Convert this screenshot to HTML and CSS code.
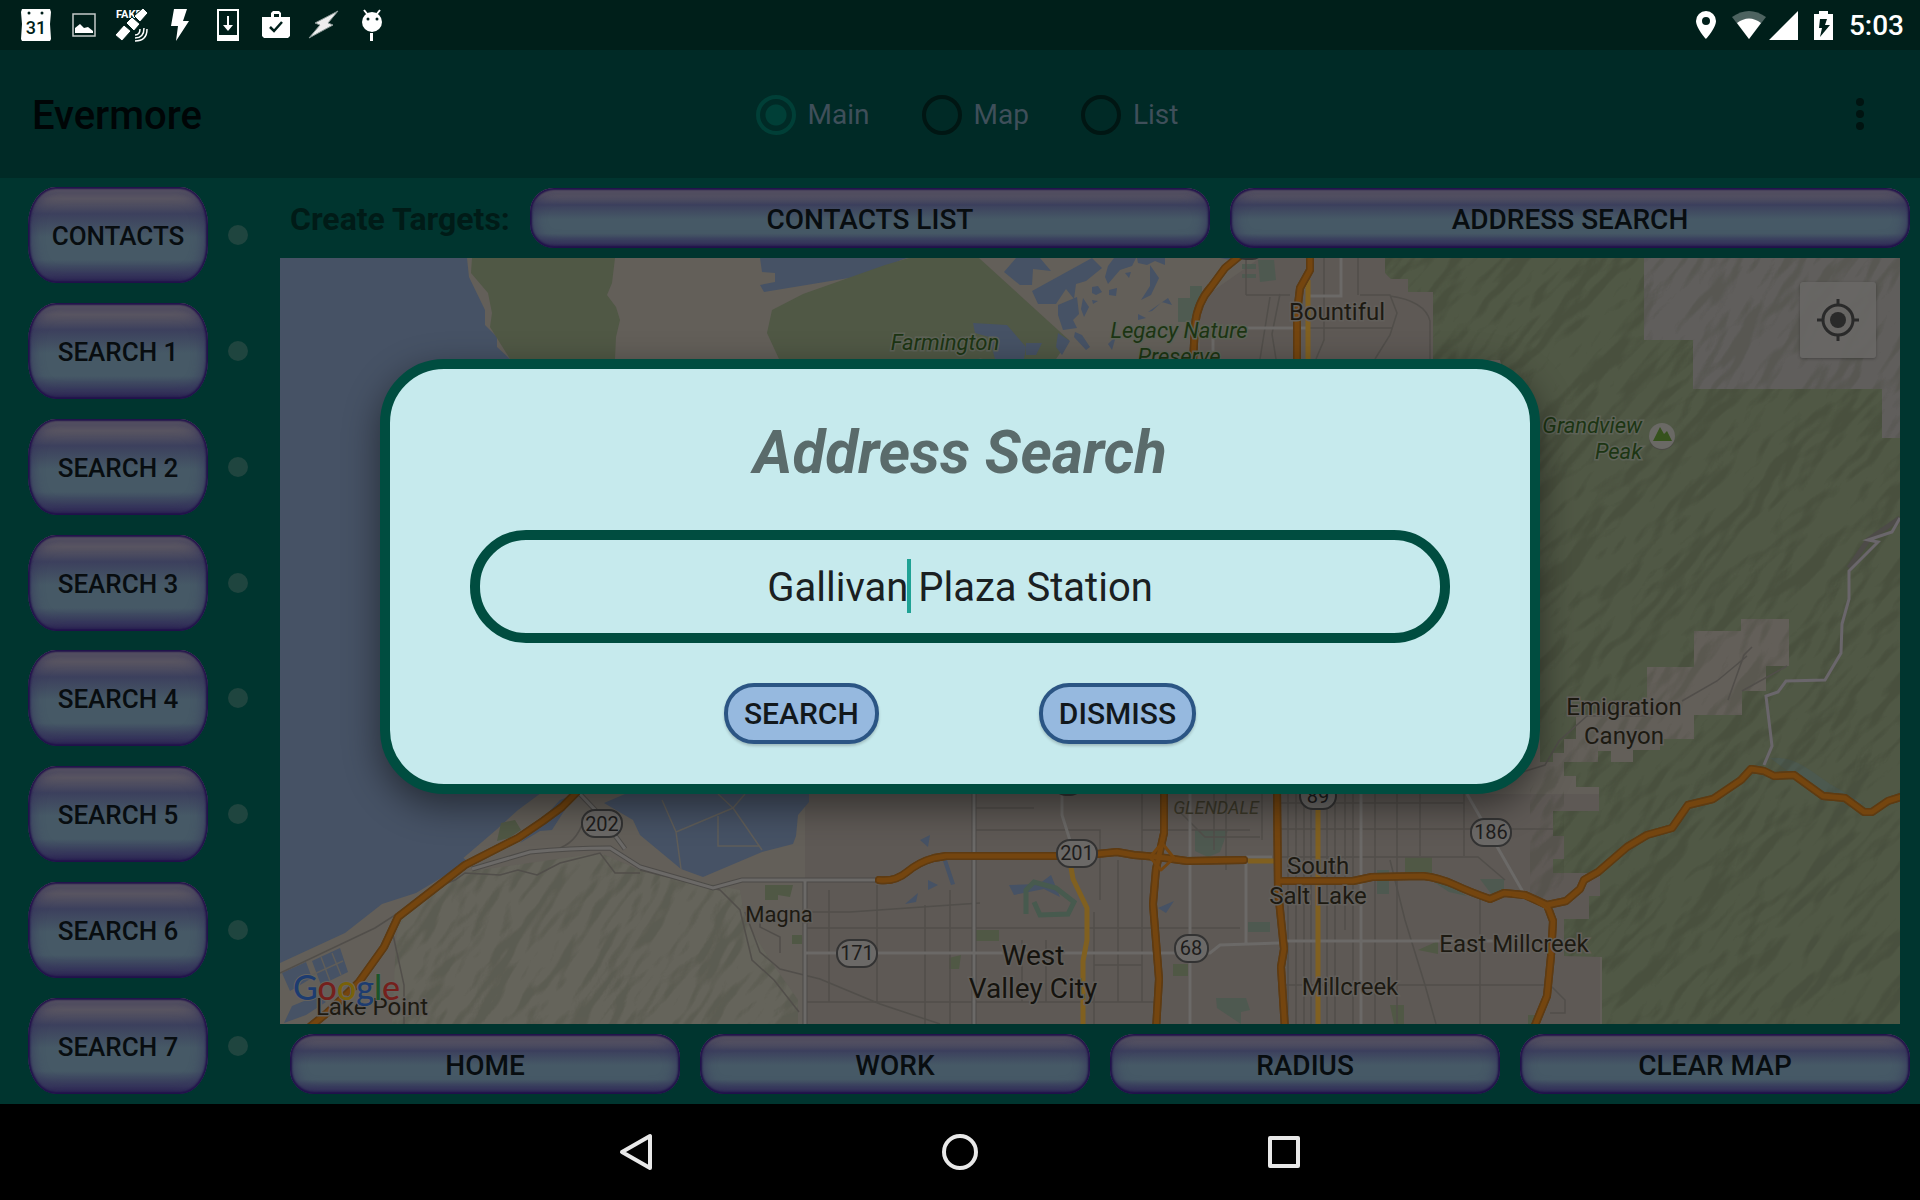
FILE: index.html
```html
<!DOCTYPE html>
<html lang="en">
<head>
<meta charset="utf-8">
<title>Evermore</title>
<link rel="stylesheet" href="styles.css">
</head>
<body>
<header class="status">
  <div class="status-icons">
    <svg width="32" height="32" viewBox="0 0 32 32"><path fill="#fff" d="M2 0h28l1 3-1 12 1 15-1 2H2l-1-2 1-15L1 3z"/><circle cx="9" cy="4" r="1.5" fill="#001f1a"/><circle cx="22" cy="4" r="1.5" fill="#001f1a"/><text class="cal" x="16" y="25">31</text></svg>
    <svg width="24" height="24" viewBox="0 0 24 24"><path fill="none" stroke="#c3cac9" stroke-width="1.5" d="M1 1h22v22H1z"/><path fill="#fff" d="M3 20v-5l5-4 4 4 4-1 5 4v2z"/></svg>
    <svg width="34" height="34" viewBox="0 0 34 34"><text class="fake" x="1" y="10">FAKE</text><g fill="#fff" stroke="#001f1a" stroke-width="1"><path d="M28 0l5 5-8 9-6-6zM17 9l8 7-6 7-8-8zM9 17l7 6-9 10-7-6z"/></g><path d="M20 27q5 0 5-6M20 30q9 0 9-10M20 33q12 0 12-12" fill="none" stroke="#fff" stroke-width="1.5"/></svg>
    <svg width="20" height="32" viewBox="0 0 20 32"><path fill="#fff" d="M4 0h13l-4 12h6L6 32l2-15H1z"/></svg>
    <svg width="22" height="32" viewBox="0 0 22 32"><path fill="none" stroke="#fff" stroke-width="2" d="M1 1h20v30H1z"/><path fill="#fff" d="M1 26h20v5H1zM10 7h2v9h4l-5 6-5-6h4z"/></svg>
    <svg width="28" height="28" viewBox="0 0 28 28"><path fill="#fff" fill-rule="evenodd" d="M9 6V2l2-2h6l2 2v4h9v19l-2 2H2l-2-2V6zm3 0h5V3h-5z"/><path d="M8 16l4 4 8-9" fill="none" stroke="#001f1a" stroke-width="2.5"/></svg>
    <svg width="30" height="28" viewBox="0 0 30 28"><path fill="#eee" stroke="#8a9896" stroke-width="1" d="M29 0L6 12l5 2L0 27l24-13-5-2z"/></svg>
    <svg width="22" height="32" viewBox="0 0 22 32"><circle cx="11" cy="13" r="10" fill="#fff"/><path d="M3 1l4 5M19 1l-4 5" stroke="#fff" stroke-width="2"/><path fill="#fff" d="M9 24h3v8H9z"/><circle cx="7" cy="10" r="1.5" fill="#001f1a"/><circle cx="16" cy="10" r="1.5" fill="#001f1a"/></svg>
  </div>
  <div class="status-right">
    <svg width="20" height="28" viewBox="0 0 20 28"><path fill="#fff" fill-rule="evenodd" d="M10 0a10 10 0 0 1 10 10c0 7-10 18-10 18S0 17 0 10A10 10 0 0 1 10 0zm0 6a4 4 0 1 0 0 8 4 4 0 0 0 0-8z"/></svg>
    <svg width="68" height="29" viewBox="0 0 68 29"><path fill="#4d6360" d="M1 6Q18-6 35 6L18 28z"/><path fill="#fff" d="M6 12q12-9 24 0L18 28zM67 0v29H38z"/></svg>
    <svg width="20" height="29" viewBox="0 0 20 29"><path fill="#fff" d="M5 0h9v3h5v26H0V3h5z"/><path fill="#001f1a" d="M6 8h7l-2 6h5L6 26l2-9H5z"/></svg>
    <time>5:03</time>
  </div>
</header>

<div class="appbar">
  <h1>Evermore</h1>
  <form class="views">
    <label><input type="radio" name="view" checked>Main</label>
    <label><input type="radio" name="view">Map</label>
    <label><input type="radio" name="view">List</label>
  </form>
  <button class="more" aria-label="More options"><i></i><i></i><i></i></button>
</div>

<main class="app">
  <nav class="side">
    <div class="side-row"><button class="gloss tall">CONTACTS</button><span class="dot"></span></div>
    <div class="side-row"><button class="gloss tall">SEARCH 1</button><span class="dot"></span></div>
    <div class="side-row"><button class="gloss tall">SEARCH 2</button><span class="dot"></span></div>
    <div class="side-row"><button class="gloss tall">SEARCH 3</button><span class="dot"></span></div>
    <div class="side-row"><button class="gloss tall">SEARCH 4</button><span class="dot"></span></div>
    <div class="side-row"><button class="gloss tall">SEARCH 5</button><span class="dot"></span></div>
    <div class="side-row"><button class="gloss tall">SEARCH 6</button><span class="dot"></span></div>
    <div class="side-row"><button class="gloss tall">SEARCH 7</button><span class="dot"></span></div>
  </nav>
  <section class="content">
    <div class="bar">
      <h2>Create Targets:</h2>
      <button class="gloss">CONTACTS LIST</button>
      <button class="gloss">ADDRESS SEARCH</button>
    </div>
    <div class="map">
      <svg class="map-art" viewBox="280 258 1620 766" preserveAspectRatio="xMidYMid slice">
        <defs>
          <clipPath id="hillclip"><use href="#hills"/></clipPath>
          <clipPath id="drylandclip"><path d="M400 915L465 872L600 853L640 870L740 890L745 920L770 960L798 1000V1024H392L396 940zM1644 258H1900V438H1882V389H1693V340H1644zM1694 631H1741V619H1789V666H1766V691H1742V715H1694V739H1598V762H1564V900H1530V790L1576 717L1647 703V667H1694z"/></clipPath>
          <filter id="relief" x="0" y="0" width="100%" height="100%" color-interpolation-filters="sRGB">
            <feTurbulence type="fractalNoise" baseFrequency="0.012 0.03" numOctaves="3" seed="8"/>
            <feColorMatrix values="0 0 0 0 0 0 0 0 0 0 0 0 0 0 0 1 0 0 0 0"/>
            <feDiffuseLighting surfaceScale="26" lighting-color="#fff"><feDistantLight azimuth="260" elevation="50"/></feDiffuseLighting>
            <feColorMatrix values="0 0 0 0 0.24  0 0 0 0 0.26  0 0 0 0 0.20  -1.5 0 0 0 1.15"/>
          </filter>
        </defs>
        <rect x="280" y="258" width="1620" height="766" fill="#635f59"/>
        <path fill="#5e5955" d="M805 794H1600V1024H805zM1260 258H1433V360H1200V300z"/>
        <path fill="#605e5c" d="M1644 258H1900V438H1882V389H1644z"/>
        <path fill="#65645b" d="M400 915L465 872L600 853L640 870L740 890L745 920L770 960L798 1000V1024H392L396 940z"/>
        <g fill="#465265">
          <path d="M280 258H467L469 277L485 310V325L497 337V347L510 359V600L541 793L518 810L496 830L461 860V856L467 861L461 866L416 893L382 904L345 933L280 963z"/>
          <path d="M760 258L762 272L775 273V282L760 285L764 292L867 275L901 260L907 258z"/>
          <path d="M1016 258H1040L1051 271L1033 269L1032 285H1020L1004 272zM1032 291L1092 258L1102 268L1086 281L1076 284L1074 299L1066 289L1056 304L1038 304zM1058 305L1077 297L1079 314L1073 320L1077 328L1063 330L1058 315zM1083 298l6 9-5 10-3-8zM1092 287l6-1 4 6-6 3-4-2zM1075 332l7 3 8 12-4 3-12-13z"/>
          <path d="M1108 266l6-8h22l-4 8-12 4-12 14-3-7zM1137 258h28v7l-10-4-8 4-9-2zM1150 265l9 13-8 17-10 5 9-14zM1109 290l8-2-1 8-7-1zM1148 312l20-14 4 7-10-3-10 9zM1138 314l8 4-8 2zM1125 273l6-1-2 6zM1220 258h20l-4 3zM1092 300l6 1-5 3zM1112 350l-4-6 8-8z"/>
          <path d="M604 803L625 794H809V802L798 815L796 836L793 844L762 852L703 877L681 869L640 835L633 820zM520 843L560 800L575 794 552 830 540 831z"/>
          <path d="M312 961l28-13 8 24-27 13zM282 973l24-11 6 16-22 13zM292 1006l24-10 10 6-20 13-22 8zM920 840l10-5-2 12zM943 861l4-1 8 24-4 1zM905 904l13-11-2 9zM928 880l10 5-10 5zM1009 885l30-1 12-9 9 22-16-8-30 6zM1158 908l16-7-8 12z"/>
          <path d="M1786 695L1807 692L1833 680L1835 685L1815 705L1789 714L1781 703zM1735 769l15-20 18-11-8 20-14 10z"/>
        </g>
        <path fill="none" stroke="#5f5d59" stroke-width="1.5" d="M662 800L676 832L681 869M676 832L733 808L762 850M733 808L745 794M718 816V846H760M718 794L733 808M312 975l31-14M321 957l9 24M332 953l9 22"/>
        <g fill="#505845">
          <path d="M472 258H615L612 283L607 295L616 307L620 320L616 337L615 359H510L490 327L492 313L488 293L471 273z"/>
          <path d="M909 258H979L1069 340L1056 359H779L767 333L772 310L803 294L885 265z"/>
          <path id="hills" d="M1385 258V273L1391 279H1408V292H1433V360H1500L1540 500V762H1553V753H1564V739H1576V717L1647 703V667H1694V631H1741V619H1789V666H1766V691H1742V715H1694V739H1660V750H1633V762H1611V751H1598V762H1564V776H1576V787H1599V811H1553V836H1564V859H1553V873H1600V896H1589V919H1564V956L1602 957V1024H1900V438H1882V389H1693V340H1644V258z"/>
          <path d="M497 841l4-18 14-3 6 10-12 8zM765 885h28l-3 12-12-2v5h-13zM975 930h24v11h-24zM792 935h10v9h-10zM949 958l12-3-2 14h-10zM1405 857h27v22h-27zM1173 964h15v12h-15zM1418 950l20-9v13zM1390 1005h14v19h-10zM1528 1015h8v9h-8z"/>
        </g>
        <path fill="#475a4e" opacity=".7" d="M1195 830h33l-8 22-12 5-13-6zM1248 922h22v10h-22zM1216 998h30l4 12-9 2v12l-24-16zM1377 870h12v24h-12zM1480 879h24v16h-12zM1258 260h16l2 20-16 2zM1242 264h14v5h-14zM1242 274h14v4h-14zM1178 298h12v-12h12v10l-8 26h-16zM1425 876l20 6 22 14-18-4z"/>
        <path fill="none" stroke="#475a4e" stroke-width="5" d="M1026 914v-24l8-8 22 6 18 14-6 12-28 1-6-13"/>
        <path fill="#475a5a" opacity=".5" d="M1770 758q20-2 40 12l20 14 35 20-42-8-30-21z"/>
        <path fill="#465265" d="M973 323L1007 325L1026 347L1024 359H995L989 337L975 333zM1026 343h16l-6 12h-10zM1058 333l12 8-8 14-6-8z"/>
        <g clip-path="url(#hillclip)"><rect x="1000" y="-200" width="1300" height="1700" transform="rotate(-48 1640 640)" filter="url(#relief)" opacity=".32"/></g>
        <g clip-path="url(#drylandclip)"><rect x="300" y="-500" width="1700" height="2300" transform="rotate(-55 1100 640)" filter="url(#relief)" opacity=".22"/></g>

        <g fill="none" stroke="#514e4a" stroke-width="1.5">
          <path d="M829 890V1002M877 885V1002M925 905V1024M950 890V1024M1022 940V1002M1046 940V1002M1094 912V1024M1118 860V1002M1142 794V1002M1226 794V870M1214 794V850M1262 794V840"/>
          <path d="M805 912H850L980 903M805 928H1240M805 1002H1156M974 830H1100V900M974 808H1034M1094 965H1142M1142 830H1250M1180 812l25 25h55M760 912v15l20 10v16"/>
          <path d="M1288 794V1024M1296 794V1024M1304 794V1024M1311 794V1024M1327 794V1024M1335 794V1024M1345 794V930M1353 794V1024M1375 794V1024M1397 794V1024M1420 794V856M1464 794V856M1480 895V1024"/>
          <path d="M1280 803H1464M1280 829H1553M1280 857H1478L1505 880M1285 985H1550L1565 1000V1013H1550M1390 860L1405 920L1425 985L1436 1024"/>
          <path d="M640 870l80 20 20 20 12 50 22 20 25 32M745 912l15 40 20 17 40 10 60 25 60 20M280 973L375 928L398 913L392 930L404 985V1024M440 886L455 880L465 873L500 875L518 870L537 875L560 863L600 853L615 873H640M560 848q20-8 25-34M1246 295V258M1246 295H1290M1276 359l-4-25 8-40M1260 359l10-62M1360 295H1390L1397 313L1390 335L1375 359M1246 328H1392M1324 258V340L1316 359M1358 258V295M1390 296q35 5 40 25v38"/>
          <path d="M1682 701l35-20 30-25M1742 691l45-25M1647 716h-60l-28 25-14 24-26 8M1728 700l16-45 8-8"/>
        </g>
        <g fill="none" stroke="#4d4b48" stroke-width="5">
          <path d="M472 869L530 852Q570 848 610 848L640 867L713 888L742 880H879M580 794L600 815L625 849M805 880V1024M974 794V1024"/>
          <path d="M1849 568L1868 540L1900 518"/>
        </g>
        <g fill="none" stroke="#6b6967" stroke-width="3">
          <path d="M472 869L530 852Q570 848 610 848L640 867L713 888L742 880H879M580 794L600 815L625 849M805 880V1024M974 794V1024M1190 794V1024M1361 794V1024M1246 857V943M805 953H1210L1220 945L1280 943M1280 941H1500M1467 794L1523 892M1062 794V815L1073 850M1341 258V296H1306M1246 328H1306M1213 330V359M1246 857h26"/>
          <path stroke="#6a666b" d="M1900 518L1892 532L1868 540L1878 542L1849 571V599L1842 624L1841 653L1825 680L1786 681L1778 692L1766 696L1772 746L1764 765"/>
        </g>
        <path fill="none" stroke="#806020" stroke-width="5" stroke-linejoin="round" d="M1071 867L1073 879L1087 908V940L1083 961V1024M1318 810V1024M1308 280V359M1248 861H1274"/>
        <g fill="none" stroke-linejoin="round" stroke-linecap="round">
          <path id="highways" stroke="#5e3b12" stroke-width="8" d="M576 793L562 807L543 821L518 838L506 844L465 865L398 917L384 947L359 982L327 1013L306 1030M879 880Q895 882 907 872T934 858L946 856H1073L1097 854L1117 852L1134 855L1158 857L1187 861L1244 860M1278 881H1353L1372 877L1423 876Q1440 878 1455 885T1490 899L1504 893L1525 895L1547 905L1566 901L1580 889L1584 880L1598 872L1627 847L1647 835L1672 828L1688 805L1713 799L1741 780L1751 769L1764 771L1774 776L1794 775L1823 796L1845 798L1864 812H1872L1888 801L1904 796M1547 905L1553 921L1551 956L1547 996L1533 1030M1164 790V833L1156 869L1153 904L1159 979L1156 1030M1277 790L1278 890L1284 949L1281 967L1285 1030M1242 254L1225 268L1211 287Q1197 303 1195 325L1193 362M1310 254V270L1300 288L1297 313V362"/>
          <use href="#highways" class="road-core"/>
          <path stroke="#74450f" stroke-width="5" d="M576 793L562 807L543 821L518 838L506 844L465 865L398 917L384 947L359 982L327 1013L306 1030M879 880Q895 882 907 872T934 858L946 856H1073L1097 854L1117 852L1134 855L1158 857L1187 861L1244 860M1278 881H1353L1372 877L1423 876Q1440 878 1455 885T1490 899L1504 893L1525 895L1547 905L1566 901L1580 889L1584 880L1598 872L1627 847L1647 835L1672 828L1688 805L1713 799L1741 780L1751 769L1764 771L1774 776L1794 775L1823 796L1845 798L1864 812H1872L1888 801L1904 796M1547 905L1553 921L1551 956L1547 996L1533 1030M1164 790V833L1156 869L1153 904L1159 979L1156 1030M1277 790L1278 890L1284 949L1281 967L1285 1030M1242 254L1225 268L1211 287Q1197 303 1195 325L1193 362M1310 254V270L1300 288L1297 313V362"/>
          <path stroke="#74450f" stroke-width="3" d="M1150 857l12-14 12 15-13 12zM1513 895q22 3 34 14"/>
        </g>

        <g fill="#6b6967" stroke="#333" stroke-width="2">
          <rect x="582" y="810" width="40" height="27" rx="13"/><rect x="837" y="940" width="40" height="27" rx="13"/><rect x="1057" y="840" width="40" height="27" rx="13"/><rect x="1175" y="935" width="33" height="27" rx="13"/><rect x="1471" y="819" width="40" height="27" rx="13"/><rect x="1300" y="783" width="36" height="26" rx="13"/><rect x="1054" y="770" width="28" height="25" rx="12"/><rect x="1234" y="234" width="30" height="25" rx="12"/>
        </g>
        <g class="shield"><text x="602" y="831">202</text><text x="857" y="960">171</text><text x="1077" y="860">201</text><text x="1191" y="955">68</text><text x="1491" y="839">186</text><text x="1318" y="803">89</text></g>
        <g class="town">
          <text x="1337" y="320">Bountiful</text>
          <text x="1624" y="715">Emigration</text><text x="1624" y="744">Canyon</text>
          <text x="1318" y="874">South</text><text x="1318" y="904">Salt Lake</text>
          <text x="1514" y="952">East Millcreek</text><text x="1350" y="995">Millcreek</text>
          <text class="small" x="779" y="922">Magna</text><text x="372" y="1015">Lake Point</text>
        </g>
        <g class="city"><text x="1033" y="965">West</text><text x="1033" y="998">Valley City</text></g>
        <g class="park">
          <text x="945" y="350">Farmington</text><text x="945" y="377">Bay Waterfowl</text>
          <text x="1179" y="338">Legacy Nature</text><text x="1179" y="364">Preserve</text>
          <text class="end" x="1642" y="433">Grandview</text><text class="end" x="1642" y="459">Peak</text>
        </g>
        <text class="area" x="1216" y="814">GLENDALE</text>
        <circle cx="1662" cy="437" r="13" fill="#4b4a46"/><circle cx="1662" cy="436" r="13" fill="#6a6965"/>
        <path fill="#36521d" d="M1653 441l7-14 4 7 3-3 5 10z"/>
        <text class="brand" x="293" y="1000"><tspan fill="#1d3c70">G</tspan><tspan fill="#74201c">o</tspan><tspan fill="#796109">o</tspan><tspan fill="#1d3c70">g</tspan><tspan fill="#1c5429">l</tspan><tspan fill="#74201c">e</tspan></text>
      </svg>
      <button class="locate" aria-label="My location">
        <svg width="44" height="44" viewBox="0 0 44 44"><circle cx="22" cy="22" r="15" fill="none" stroke="#2a2a2a" stroke-width="3"/><circle cx="22" cy="22" r="8" fill="#2a2a2a"/><path d="M22 1v7M22 36v7M1 22h7M36 22h7" stroke="#2a2a2a" stroke-width="3"/></svg>
      </button>
    </div>
    <div class="bar">
      <button class="gloss">HOME</button>
      <button class="gloss">WORK</button>
      <button class="gloss">RADIUS</button>
      <button class="gloss">CLEAR MAP</button>
    </div>
  </section>

  <div class="overlay">
    <form class="dialog" role="dialog" aria-labelledby="dialog-title">
      <h2 id="dialog-title">Address Search</h2>
      <div class="field">
        <input type="text" value="Gallivan Plaza Station" aria-labelledby="dialog-title">
        <span class="caret"></span>
      </div>
      <div class="actions">
        <button type="button">SEARCH</button>
        <button type="button">DISMISS</button>
      </div>
    </form>
  </div>
</main>

<footer class="navbar">
  <button aria-label="Back"><svg width="40" height="40" viewBox="0 0 40 40"><path d="M34 4v32L6 20z"/></svg></button>
  <button aria-label="Home"><svg width="40" height="40" viewBox="0 0 40 40"><circle cx="20" cy="20" r="16"/></svg></button>
  <button aria-label="Recent apps"><svg width="40" height="40" viewBox="0 0 40 40"><path d="M6 6h28v28H6z"/></svg></button>
</footer>
</body>
</html>
```
FILE: styles.css
```css
* { box-sizing: border-box; }

body {
  margin: 0;
  min-height: 100vh;
  display: flex;
  flex-direction: column;
  background: #00352f;
  color: #080d10;
  font-family: Roboto, "Liberation Sans", sans-serif;
}

h1, h2 { margin: 0; }
button, input { font-family: inherit; color: inherit; }
button { border: 0; padding: 0; background: none; }
svg { display: block; }

/* Status bar */
.status {
  height: 50px;
  display: flex;
  justify-content: space-between;
  align-items: center;
  padding: 0 16px 0 12px;
  background: #001f1a;
  color: #fff;
}
.status-icons { display: grid; grid-template-columns: repeat(8, 48px); justify-items: center; align-items: center; }
.status-icons svg { overflow: visible; }
.status-right { display: flex; align-items: center; gap: 15px; }
.status-right time { font-size: 28px; font-weight: 500; line-height: 32px; padding-top: 2px; }
.cal { font-size: 18px; font-weight: 500; text-anchor: middle; fill: #001f1a; }
.fake { font-size: 11px; font-weight: 700; fill: #fff; }

/* App bar */
.appbar {
  height: 128px;
  display: grid;
  grid-template-columns: 1fr auto 1fr;
  align-items: center;
  padding: 0 32px;
  background: #002a26;
}
.appbar h1 { padding-top: 4px; font-size: 40px; line-height: 48px; font-weight: 500; color: #000506; }
.views { display: flex; gap: 52px; padding: 2px 0 0 14px; }
.views label { display: flex; align-items: center; gap: 12px; font-size: 28px; line-height: 40px; color: #3f4f5a; }
.views input {
  appearance: none;
  width: 40px;
  height: 40px;
  margin: 0;
  border: 4px solid #001613;
  border-radius: 50%;
}
.views input:checked {
  border-color: #003f37;
  background: radial-gradient(circle, #003f37 10px, transparent 11px);
}
.more { justify-self: end; width: 56px; display: grid; gap: 4px; justify-items: center; }
.more i { width: 8px; height: 8px; border-radius: 50%; background: #001411; }

/* Main area */
.app { flex: 1; display: flex; position: relative; }
.side {
  width: 280px;
  display: flex;
  flex-direction: column;
  justify-content: space-between;
  padding: 9px 0 10px 28px;
}
.side-row { display: flex; align-items: center; gap: 20px; }
.dot { width: 20px; height: 20px; border-radius: 50%; background: #1f453f; }
.content { flex: 1; min-width: 0; display: flex; flex-direction: column; }
.bar { display: flex; gap: 20px; padding: 10px; align-items: center; }
.bar h2 { width: 220px; padding-top: 2px; font-size: 32px; line-height: 36px; font-weight: 700; color: #001b17; white-space: nowrap; }

.gloss {
  flex: 1;
  height: 60px;
  padding-top: 2px;
  border-radius: 24px;
  font-size: 28px;
  font-weight: 500;
  background: linear-gradient(#5b5762 12%, #3c405d 28%, #465966 52%, #465966 76%, #35355a 92%, #22154a);
  box-shadow: inset 0 0 2px 2px #20104a, inset 0 5px 3px -1px #5b5763, inset 0 0 14px 2px #34345b;
}
.tall {
  flex: none;
  width: 180px;
  height: 96px;
  border-radius: 28px / 38px;
  font-size: 26px;
}

/* Map */
.map { flex: 1; min-height: 0; margin-right: 20px; position: relative; overflow: hidden; }
.map-art { position: absolute; width: 100%; height: 100%; }
.map-art text { text-anchor: middle; paint-order: stroke; }
.map-art .town { font-size: 24px; fill: #1d1a12; stroke: #625f5b; stroke-width: 3px; }
.map-art .small { font-size: 22px; }
.map-art .city { font-size: 28px; fill: #15130e; stroke: #625f5b; stroke-width: 3px; }
.map-art .park { font-size: 22px; font-style: italic; fill: #1c3513; stroke: #5d6257; stroke-width: 3px; }
.map-art .area { font-size: 18px; font-style: italic; fill: #3b3829; }
.map-art .shield { font-size: 20px; fill: #1e1d1c; }
.map-art .end { text-anchor: end; }
.map-art .brand { font: 500 34px Lato, sans-serif; text-anchor: start; stroke: #65635f; stroke-width: 2px; }
.locate {
  position: absolute;
  top: 24px;
  right: 24px;
  width: 76px;
  height: 76px;
  display: grid;
  place-items: center;
  border-radius: 3px;
  background: #696865e0;
  box-shadow: 0 1px 3px #0004;
}

/* Dialog */
.overlay { position: absolute; inset: 0; bottom: 130px; display: grid; place-items: center; }
.dialog {
  width: 1160px;
  max-width: 90%;
  padding: 48px 80px 40px;
  border: 10px solid #004d40;
  border-radius: 64px;
  background: #c6eaed;
  box-shadow: 0 12px 36px #0007;
  display: flex;
  flex-direction: column;
  align-items: center;
}
.dialog h2 { font-size: 60px; line-height: 72px; font-style: italic; font-weight: 700; color: #5a6b6b; }
.field { position: relative; width: 100%; margin: 41px 0 40px; }
.field input {
  display: block;
  width: 100%;
  height: 113px;
  padding: 2px 0 0;
  border: 10px solid #004d40;
  border-radius: 56px;
  background: none;
  font-size: 40px;
  color: #1a2022;
  text-align: center;
  outline: 0;
}
.caret { position: absolute; left: calc(50% - 53px); top: 29px; width: 4px; height: 54px; background: #1fa294; }
.actions { display: flex; gap: 160px; }
.actions button {
  min-width: 155px;
  height: 61px;
  padding: 0 16px;
  border: 4px solid #2b5584;
  border-radius: 30px;
  background: #96b9df;
  color: #12181c;
  font-size: 30px;
  font-weight: 500;
  box-shadow: 0 2px 3px #0003;
}

/* Navigation bar */
.navbar { height: 96px; display: flex; justify-content: center; align-items: center; gap: 284px; background: #000; }
.navbar path, .navbar circle { fill: none; stroke: #e8e8e8; stroke-width: 4; stroke-linejoin: round; }
```
